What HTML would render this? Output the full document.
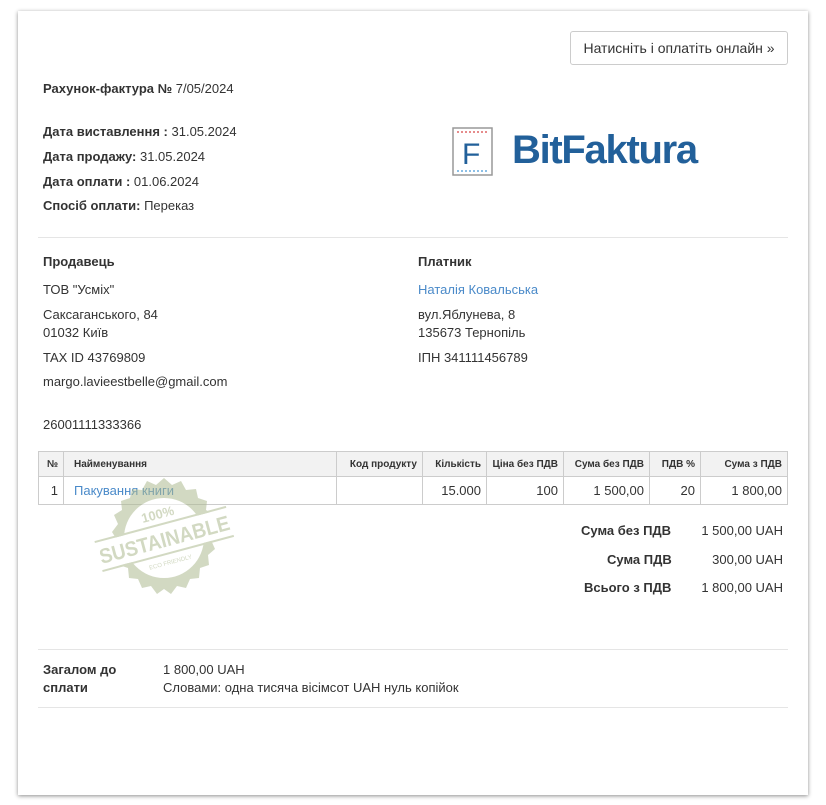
<!DOCTYPE html>
<html><head><meta charset="utf-8"><style>
body{margin:0;background:#fff;font-family:"Liberation Sans",sans-serif;font-size:13px;color:#333;}
.page{position:absolute;left:18px;top:11px;width:790px;height:784px;background:#fff;box-shadow:0 1px 4px rgba(0,0,0,.45);}
.a{position:absolute;white-space:nowrap;}
b{font-weight:bold;}
.btn{position:absolute;left:552px;top:20px;width:216px;height:32px;border:1px solid #ccc;border-radius:3px;font-size:14px;line-height:32px;text-align:center;color:#333;}
.hr{position:absolute;left:20px;width:750px;height:1px;background:#e5e5e5;}
table{position:absolute;left:20px;top:440px;border-collapse:collapse;width:750px;}
td,th{border:1px solid #ccc;padding:0 5px;}
th{background:#f2f2f2;height:24px;font-size:10px;text-align:right;}
td{height:27px;font-size:13px;text-align:right;}
a{color:#4a8ac9;text-decoration:none}
</style></head><body><div class="page">
<div class="btn">Натисніть і оплатіть онлайн »</div>
<div class="a" style="left:25px;top:70px"><b>Рахунок-фактура №</b> 7/05/2024</div>
<div class="a" style="left:25px;top:113px"><b>Дата виставлення :</b> 31.05.2024</div>
<div class="a" style="left:25px;top:138px"><b>Дата продажу:</b> 31.05.2024</div>
<div class="a" style="left:25px;top:163px"><b>Дата оплати :</b> 01.06.2024</div>
<div class="a" style="left:25px;top:187px"><b>Спосіб оплати:</b> Переказ</div>
<svg class="a" style="left:434px;top:116px" width="42" height="50"><rect x="1" y="1" width="39" height="47" fill="#fff" stroke="#999" stroke-width="1.5"/><line x1="5" y1="5" x2="37" y2="5" stroke="#d66" stroke-width="1.5" stroke-dasharray="2,2"/><line x1="5" y1="44" x2="37" y2="44" stroke="#6ad" stroke-width="1.5" stroke-dasharray="2,2"/><text x="10" y="37" font-family="Liberation Sans" font-size="30" fill="#22609a">F</text></svg>
<div class="a" style="left:494px;top:117px;font-size:40px;font-weight:bold;color:#22609a;letter-spacing:-1.3px">BitFaktura</div>
<div class="hr" style="top:226px"></div>
<div class="a" style="left:25px;top:243px"><b>Продавець</b></div>
<div class="a" style="left:25px;top:271px">ТОВ "Усміх"</div>
<div class="a" style="left:25px;top:296px">Саксаганського, 84</div>
<div class="a" style="left:25px;top:314px">01032 Київ</div>
<div class="a" style="left:25px;top:339px">TAX ID 43769809</div>
<div class="a" style="left:25px;top:363px">margo.lavieestbelle@gmail.com</div>
<div class="a" style="left:25px;top:406px">26001111333366</div>
<div class="a" style="left:400px;top:243px"><b>Платник</b></div>
<div class="a" style="left:400px;top:271px"><a>Наталія Ковальська</a></div>
<div class="a" style="left:400px;top:296px">вул.Яблунева, 8</div>
<div class="a" style="left:400px;top:314px">135673 Тернопіль</div>
<div class="a" style="left:400px;top:339px">ІПН 341111456789</div>
<table><tr><th style="width:14px">№</th><th style="text-align:left;width:257px;padding-left:10px">Найменування</th><th style="width:75px">Код продукту</th><th style="width:53px">Кількість</th><th style="width:66px">Ціна без ПДВ</th><th style="width:75px">Сума без ПДВ</th><th style="width:40px">ПДВ %</th><th>Сума з ПДВ</th></tr>
<tr><td>1</td><td style="text-align:left;padding-left:10px"><a>Пакування книги</a></td><td></td><td>15.000</td><td>100</td><td>1 500,00</td><td>20</td><td>1 800,00</td></tr></table>
<svg class="a" style="left:75px;top:465px" width="142" height="124" opacity="0.55"><g transform="translate(71,62)"><polygon fill="#aebb92" points="0,-60 8,-53 17,-57 22,-48 32,-49 34,-40 43,-37 42,-28 50,-23 46,-14 52,-6 47,2 51,11 44,17 45,27 36,30 35,40 26,41 22,50 13,48 7,56 0,51 -7,56 -13,48 -22,50 -26,41 -35,40 -36,30 -45,27 -44,17 -51,11 -47,2 -52,-6 -46,-14 -50,-23 -42,-28 -43,-37 -34,-40 -32,-49 -22,-48 -17,-57 -8,-53"/><circle r="40" fill="#fff"/><g transform="rotate(-15)"><rect x="-70" y="-13" width="140" height="28" fill="#fff"/><line x1="-68" y1="-14" x2="68" y2="-14" stroke="#aebb92" stroke-width="2"/><line x1="-68" y1="16" x2="68" y2="16" stroke="#aebb92" stroke-width="2"/><text x="0" y="9" text-anchor="middle" font-family="Liberation Sans" font-weight="bold" font-size="21" textLength="134" lengthAdjust="spacingAndGlyphs" fill="#aebb92">SUSTAINABLE</text><text x="0" y="-20" text-anchor="middle" font-family="Liberation Sans" font-weight="bold" font-size="13" fill="#aebb92">100%</text><text x="0" y="27" text-anchor="middle" font-family="Liberation Sans" font-size="6" fill="#aebb92">ECO FRIENDLY</text></g></g></svg>
<div class="a" style="left:563px;top:512px;font-weight:bold">Сума без ПДВ</div><div class="a" style="right:25px;top:512px">1 500,00 UAH</div>
<div class="a" style="left:589px;top:541px;font-weight:bold">Сума ПДВ</div><div class="a" style="right:25px;top:541px">300,00 UAH</div>
<div class="a" style="left:566px;top:569px;font-weight:bold">Всього з ПДВ</div><div class="a" style="right:25px;top:569px">1 800,00 UAH</div>
<div class="hr" style="top:638px"></div>
<div class="a" style="left:25px;top:650px;line-height:18px"><b>Загалом до<br>сплати</b></div>
<div class="a" style="left:145px;top:650px;line-height:18px">1 800,00 UAH<br>Словами: одна тисяча вісімсот UAH нуль копійок</div>
<div class="hr" style="top:696px"></div>
</div></body></html>
